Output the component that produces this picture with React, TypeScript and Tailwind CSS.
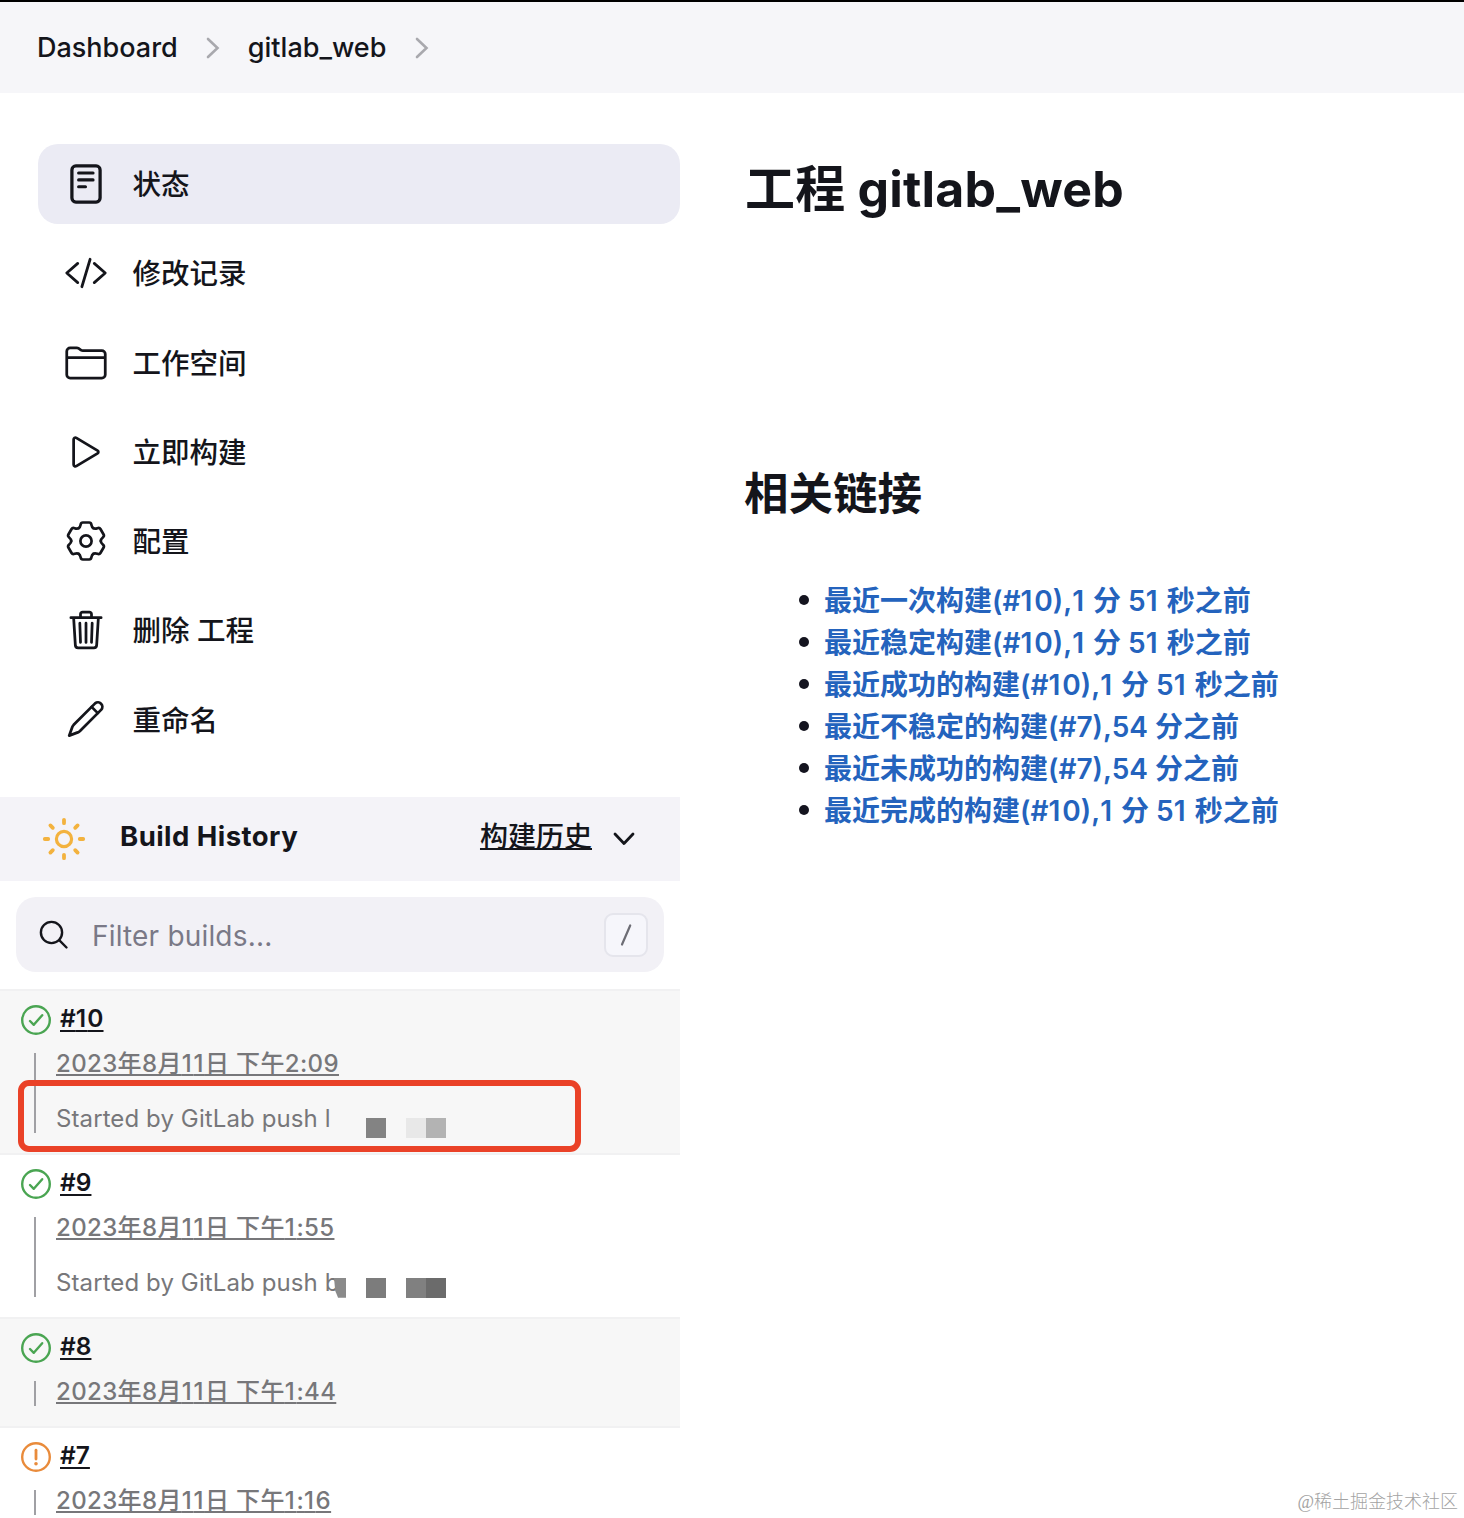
import React from "react";

type IconProps = { children: React.ReactNode };

const MenuIcon = ({ children }: IconProps) => (
  <svg
    viewBox="0 0 512 512"
    className="w-11 h-11 shrink-0"
    fill="none"
    stroke="currentColor"
    strokeWidth="32"
    strokeLinecap="round"
    strokeLinejoin="round"
  >
    {children}
  </svg>
);

const StatusIcon = () => (
  <MenuIcon>
    <rect x="92" y="46" width="328" height="420" rx="46" strokeWidth="38" />
    <path d="M170 128h168M170 208h168M170 288h80" strokeWidth="36" />
  </MenuIcon>
);

const ChangesIcon = () => (
  <MenuIcon>
    <path d="M160 368L32 256l128-112M352 368l128-112-128-112M304 96l-96 320" />
  </MenuIcon>
);

const WorkspaceIcon = () => (
  <MenuIcon>
    <path d="M440 432H72a40 40 0 01-40-40V120a40 40 0 0140-40h75.89a40 40 0 0122.19 6.72l27.84 18.56a40 40 0 0022.19 6.72H440a40 40 0 0140 40v240a40 40 0 01-40 40zM32 192h448" />
  </MenuIcon>
);

const BuildNowIcon = () => (
  <MenuIcon>
    <path d="M112 111v290c0 17.44 17 28.52 31 20.16l247.9-148.37c12.12-7.25 12.12-26.33 0-33.58L143 90.84c-14-8.36-31 2.72-31 20.16z" />
  </MenuIcon>
);

const GearIcon = () => (
  <svg
    viewBox="-22 -22 44 44"
    className="w-11 h-11 shrink-0"
    fill="none"
    stroke="currentColor"
    strokeWidth="2.7"
    strokeLinecap="round"
    strokeLinejoin="round"
  >
    <circle r="5.6" />
    {[0, 60, 120, 180, 240, 300].map((angle) => (
      <path
        key={angle}
        transform={`rotate(${angle})`}
        d="M-7.4-12.8Q-5.9-13.6-5.4-16.3Q-5-18.5-3.2-18.5H3.2Q5-18.5 5.4-16.3Q5.9-13.6 7.4-12.8"
      />
    ))}
  </svg>
);

const TrashIcon = () => (
  <MenuIcon>
    <path d="M112 112l20 320c.95 18.49 14.4 32 32 32h184c17.67 0 30.87-13.51 32-32l20-320M80 112h352" />
    <path d="M192 112V72a23.93 23.93 0 0124-24h80a23.93 23.93 0 0124 24v40M256 176v224M184 176l8 224M328 176l-8 224" />
  </MenuIcon>
);

const PencilIcon = () => (
  <svg
    viewBox="0 0 44 44"
    className="w-11 h-11 shrink-0"
    fill="none"
    stroke="currentColor"
    strokeWidth="2.75"
    strokeLinecap="round"
    strokeLinejoin="round"
  >
    <path d="M31.1 5.4A4.4 4.4 0 0 1 37.3 11.6L16 33Q15 33.9 13.8 34.4L5.2 37.6L8.3 29Q8.8 27.8 9.7 26.8Z" />
    <path d="M27.6 8.9L33.8 15.1" />
  </svg>
);

const SunIcon = () => (
  <svg
    viewBox="-22 -22 44 44"
    className="w-11 h-11 shrink-0"
    fill="none"
    stroke="#f3b23e"
    strokeWidth="3.8"
    strokeLinecap="round"
  >
    <circle r="7.6" strokeWidth="3.2" />
    <path d="M0-19.2V-15.8M0 19.2V15.8M-19.2 0H-15.8M19.2 0H15.8M-13.6-13.6L-11.2-11.2M13.6-13.6L11.2-11.2M-13.6 13.6L-11.2 11.2M13.6 13.6L11.2 11.2" />
  </svg>
);

const BuildStatus = ({ ok }: { ok: boolean }) => (
  <svg
    viewBox="-16 -16 32 32"
    className="w-8 h-8 shrink-0"
    fill="none"
    stroke={ok ? "#4aa552" : "#e98b3b"}
    strokeWidth="2.4"
    strokeLinecap="round"
    strokeLinejoin="round"
  >
    <circle r="13.8" />
    {ok ? (
      <path d="M-6 1L-2.2 4.8L6.2-4.8" />
    ) : (
      <>
        <path d="M0-6.8V2" strokeWidth="2.8" />
        <circle cy="6.8" r="1.8" fill="#e98b3b" stroke="none" />
      </>
    )}
  </svg>
);

const Crumb = () => (
  <svg viewBox="0 0 14 24" className="w-3.5 h-6" fill="none" stroke="#a9a9ae" strokeWidth="2.6" strokeLinecap="round">
    <path d="M2 3L11.5 12L2 21" />
  </svg>
);

// the digit 1 is narrow in Inter, so it gets a bit more room than the rest
const Spaced = ({ text, one }: { text: string; one: string }) => (
  <>
    {text.split(/(1)/).map((part, i) =>
      part === "1" ? (
        <span key={i} className={one}>
          1
        </span>
      ) : (
        part
      )
    )}
  </>
);

const menu = [
  { label: "状态", icon: <StatusIcon />, active: true },
  { label: "修改记录", icon: <ChangesIcon /> },
  { label: "工作空间", icon: <WorkspaceIcon /> },
  { label: "立即构建", icon: <BuildNowIcon /> },
  { label: "配置", icon: <GearIcon /> },
  { label: "删除 工程", icon: <TrashIcon /> },
  { label: "重命名", icon: <PencilIcon /> },
];

const builds = [
  { id: "#10", date: "2023年8月11日 下午2:09", cause: "Started by GitLab push l", ok: true },
  { id: "#9", date: "2023年8月11日 下午1:55", cause: "Started by GitLab push b", ok: true },
  { id: "#8", date: "2023年8月11日 下午1:44", ok: true },
  { id: "#7", date: "2023年8月11日 下午1:16", ok: false },
];

const links = [
  "最近一次构建(#10),1 分 51 秒之前",
  "最近稳定构建(#10),1 分 51 秒之前",
  "最近成功的构建(#10),1 分 51 秒之前",
  "最近不稳定的构建(#7),54 分之前",
  "最近未成功的构建(#7),54 分之前",
  "最近完成的构建(#10),1 分 51 秒之前",
];

const SidePanel = () => (
  <aside className="w-[680px] shrink-0 pt-[51px]">
    <nav className="flex flex-col gap-[9.3px] pl-[38px]">
      {menu.map((item) => (
        <a
          key={item.label}
          className={`flex items-center h-20 pl-[26px] gap-[24.5px] rounded-[20px] text-[28.5px] font-medium ${
            item.active ? "bg-[#ebebf4]" : ""
          }`}
        >
          {item.icon}
          <span className="pt-0.5 leading-10">{item.label}</span>
        </a>
      ))}
    </nav>

    <div className="mt-[37px]">
      <div className="flex items-center h-[84px] pl-[42px] pr-[43px] bg-[#f4f3f8]">
        <SunIcon />
        <span className="ml-[34px] mb-1.5 text-[27.5px] leading-10 font-bold tracking-[0.45px]">Build History</span>
        <span className="ml-auto mb-1 text-[28px] leading-10 font-medium underline decoration-2 underline-offset-1 [text-decoration-skip-ink:none]">
          构建历史
        </span>
        <svg viewBox="0 0 26 16" className="ml-[19px] w-[26px] h-4" fill="none" stroke="currentColor" strokeWidth="2.8" strokeLinecap="round" strokeLinejoin="round">
          <path d="M4 3L13 12.5L22 3" />
        </svg>
      </div>

      <div className="flex items-center mx-4 mt-4 h-[75px] pt-0.5 pl-[22px] pr-4 rounded-[20px] bg-[#f2f1f6]">
        <svg viewBox="0 0 32 32" className="w-8 h-8" fill="none" stroke="currentColor" strokeWidth="2.4" strokeLinecap="round">
          <circle cx="13.5" cy="13.5" r="10.6" />
          <path d="M21.2 21.2L28.5 28.5" />
        </svg>
        <span className="ml-[22px] pt-px text-[28px] leading-10 tracking-[0.18px] text-[#7a7987]">Filter builds...</span>
        <kbd className="ml-auto flex items-center justify-center w-11 h-11 rounded-[9px] border-2 border-[#e5e5ec] bg-[#f6f6fb]">
          <svg viewBox="0 0 12 24" className="w-3 h-6" stroke="#6d6d75" strokeWidth="2.2" strokeLinecap="round">
            <path d="M10.2 2.5L2 21.5" />
          </svg>
        </kbd>
      </div>

      <div className="relative mt-[17px]">
        {builds.map((build, i) => (
          <div
            key={build.id}
            className={`border-t-2 border-[#f1f1f2] ${build.cause ? "h-[164px]" : "h-[109.5px]"} ${i % 2 ? "bg-white" : "bg-[#f7f7f7]"}`}
          >
            <div className="flex items-center h-12 pl-5 pt-2.5 gap-2">
              <BuildStatus ok={build.ok} />
              <a className="mb-1 text-[24.5px] leading-8 font-semibold underline decoration-2 underline-offset-[3px] [text-decoration-skip-ink:none]">
                <Spaced text={build.id} one="tracking-[1.2px]" />
              </a>
            </div>
            <div
              className={`ml-[34px] mt-3.5 pl-5 border-l-2 border-[#a0a0a4] text-[#77777a] text-[24px] ${
                build.cause ? "h-20" : "h-[25px]"
              }`}
            >
              <a className="block w-fit whitespace-nowrap leading-[21px] font-medium tracking-[0.37px] underline decoration-2 underline-offset-2 [text-decoration-skip-ink:none]">
                <Spaced text={build.date} one="tracking-[1.6px]" />
              </a>
              {build.cause && <p className="mt-[30px] leading-[30px] tracking-[0.1px]">{build.cause}</p>}
            </div>
          </div>
        ))}

        {/* masked user names */}
        <div className="absolute left-[366px] top-[129px] flex">
          <span className="w-5 h-5 bg-[#838383]" />
          <span className="ml-5 w-5 h-5 bg-[#e8e8e8]" />
          <span className="w-5 h-5 bg-[#b3b3b3]" />
        </div>
        <div className="absolute left-[334px] top-[289px] flex">
          <span className="w-3 h-5 bg-[#8a8a8a] [clip-path:polygon(0_0,100%_0,100%_100%,34%_100%,10%_65%)]" />
          <span className="ml-5 w-5 h-5 bg-[#7c7c7c]" />
          <span className="ml-5 w-5 h-5 bg-[#808080]" />
          <span className="w-5 h-5 bg-[#6b6b6b]" />
        </div>
        <div className="absolute left-[18px] top-[91px] w-[563px] h-[72px] rounded-[11px] border-[6px] border-[#ea4228]" />
      </div>
    </div>
  </aside>
);

const MainPanel = () => (
  <main className="pl-[65px] pt-[66px]">
    <h1 className="text-[50px] leading-[60px] font-bold tracking-[0.2px] whitespace-nowrap">工程 gitlab_web</h1>
    <h2 className="mt-[245px] -ml-px text-[44.5px] leading-[60px] font-bold">相关链接</h2>
    <ul className="mt-[55px] pl-[54px]">
      {links.map((link) => (
        <li key={link} className="flex items-center h-[42px]">
          <span className="w-2.5 h-2.5 rounded-full bg-[#14141f]" />
          <a className="ml-[15px] pt-0.5 text-[28px] leading-10 font-semibold text-[#2463bd] whitespace-nowrap">
            <Spaced text={link} one="tracking-[2px]" />
          </a>
        </li>
      ))}
    </ul>
  </main>
);

const App = () => {
  return (
    <div className="relative w-[1464px] h-[1518px] overflow-hidden bg-white text-[#14151b] font-['Inter','Noto_Sans_CJK_SC',sans-serif]">
      <header className="flex items-center h-[93px] border-t-2 border-black bg-[#f6f6f9] pl-[37px] text-[27px] font-medium">
        <span className="pt-0.5">Dashboard</span>
        <span className="ml-[28px]">
          <Crumb />
        </span>
        <span className="ml-[28px] pt-0.5">gitlab_web</span>
        <span className="ml-[29px]">
          <Crumb />
        </span>
      </header>
      <div className="flex">
        <SidePanel />
        <MainPanel />
      </div>
      <div className="absolute right-[6px] bottom-1 text-[18px] leading-6 text-[#a3a3a3] font-['Liberation_Serif','Noto_Sans_CJK_SC',serif] font-light">
        @稀土掘金技术社区
      </div>
    </div>
  );
};

export default App;
